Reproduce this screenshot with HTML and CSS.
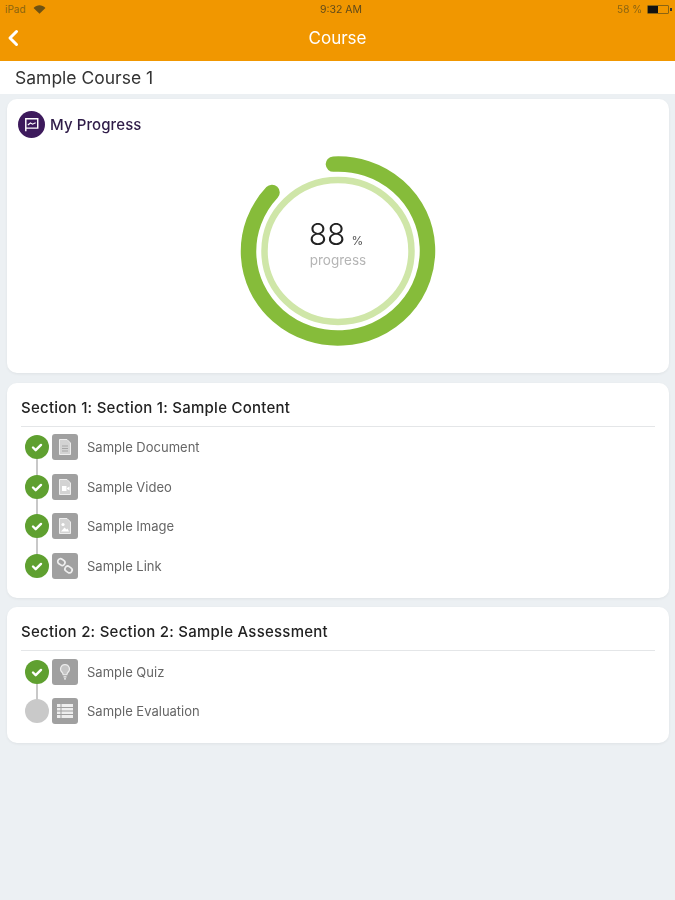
FILE: index.html
```html
<!DOCTYPE html>
<html lang="en">
<head>
<meta charset="utf-8">
<title>Course</title>
<link rel="stylesheet" href="styles.css">
</head>
<body>
<header class="appbar">
  <div class="status">
    <div class="status-left"><span>iPad</span>
      <svg class="wifi" viewBox="0 0 14 10" width="13" height="9"><path d="M7 9.600 0.400 3.200C4.200-.6 9.800-.6 13.600 3.200Z" fill="#6e5213"/></svg>
    </div>
    <span class="status-time">9:32 AM</span>
    <div class="status-right"><span>58 %</span>
      <span class="battery"><span class="battery-fill"></span></span><span class="battery-tip"></span>
    </div>
  </div>
  <div class="nav">
    <svg class="back" viewBox="0 0 12 18" width="12" height="18"><path d="M9.500 2.500 3 9l6.500 6.500" fill="none" stroke="#fff" stroke-width="3" stroke-linecap="round" stroke-linejoin="round"/></svg>
    <span class="nav-title">Course</span>
  </div>
</header>
<div class="course-name">Sample Course 1</div>
<main class="content">
  <section class="card progress-card">
    <div class="progress-head">
      <span class="flag"><svg viewBox="0 0 26 26" width="27" height="27"><path d="M7.500 7.500h11.500v9H7.500zM7.500 7.500v12" fill="none" stroke="#fff" stroke-width="1.400"/><path d="M9.500 13.500l2.500-2 2 1.200 3-1.400" fill="none" stroke="#fff" stroke-width="1.100"/></svg></span>
      <h2 class="progress-title">My Progress</h2>
    </div>
    <div class="ring-wrap">
      <svg class="ring" viewBox="0 0 200 196" width="200" height="196">
        <ellipse cx="100" cy="98" rx="73.500" ry="71" fill="none" stroke="#cfe6a8" stroke-width="6.500"/>
        <ellipse cx="100" cy="98" rx="87" ry="89.500" fill="none" stroke="#86bc3a" stroke-width="15.500" stroke-linecap="round" pathLength="100" stroke-dasharray="87.500 12.500" transform="rotate(-93 100 98)"/>
      </svg>
      <div class="ring-label">
        <div class="ring-value"><span class="ring-num">88</span><span class="ring-pct">%</span></div>
        <div class="ring-sub">progress</div>
      </div>
    </div>
  </section>

  <section class="card section-card">
    <h3 class="section-title">Section 1: Section 1: Sample Content</h3>
    <ul class="items">
      <li class="item">
        <span class="check done"><svg viewBox="0 0 24 24" width="24" height="24"><path d="M8 12.500l2.700 2.700 5.300-5.300" fill="none" stroke="#fff" stroke-width="2.400" stroke-linecap="round" stroke-linejoin="round"/></svg></span>
        <span class="tile"><svg viewBox="0 0 26 26" width="26" height="26"><path d="M7.500 5.500h7.500l3.500 3.500v11.500h-11z" fill="#d3d3d3" stroke="#eee" stroke-width="1"/><path d="M10 12h6M10 14.500h6M10 17h6" stroke="#a5a5a5" stroke-width="1"/></svg></span>
        <span class="item-name">Sample Document</span>
      </li>
      <li class="item">
        <span class="check done"><svg viewBox="0 0 24 24" width="24" height="24"><path d="M8 12.500l2.700 2.700 5.300-5.300" fill="none" stroke="#fff" stroke-width="2.400" stroke-linecap="round" stroke-linejoin="round"/></svg></span>
        <span class="tile"><svg viewBox="0 0 26 26" width="26" height="26"><path d="M7.500 5.500h7.500l3.500 3.500v11.500h-11z" fill="#d3d3d3" stroke="#eee" stroke-width="1"/><path d="M10 12h4.500v5H10z" fill="#fff"/><path d="M15 14l2.500-1.500v4L15 15z" fill="#fff"/></svg></span>
        <span class="item-name">Sample Video</span>
      </li>
      <li class="item">
        <span class="check done"><svg viewBox="0 0 24 24" width="24" height="24"><path d="M8 12.500l2.700 2.700 5.300-5.300" fill="none" stroke="#fff" stroke-width="2.400" stroke-linecap="round" stroke-linejoin="round"/></svg></span>
        <span class="tile"><svg viewBox="0 0 26 26" width="26" height="26"><path d="M7.500 5.500h7.500l3.500 3.500v11.500h-11z" fill="#d3d3d3" stroke="#eee" stroke-width="1"/><circle cx="11" cy="11.500" r="1.600" fill="#fff"/><path d="M9 18.500l3.500-4 2 2 1-1 1.500 3z" fill="#fff"/></svg></span>
        <span class="item-name">Sample Image</span>
      </li>
      <li class="item">
        <span class="check done"><svg viewBox="0 0 24 24" width="24" height="24"><path d="M8 12.500l2.700 2.700 5.300-5.300" fill="none" stroke="#fff" stroke-width="2.400" stroke-linecap="round" stroke-linejoin="round"/></svg></span>
        <span class="tile"><svg viewBox="0 0 26 26" width="26" height="26"><g transform="rotate(-5 13 13)"><rect x="6" y="6" width="7.500" height="5.500" rx="2.700" transform="rotate(40 9.700 8.700)" fill="none" stroke="#eee" stroke-width="1.700"/><rect x="12.500" y="14" width="7.500" height="5.500" rx="2.700" transform="rotate(40 16.200 16.700)" fill="none" stroke="#eee" stroke-width="1.700"/></g></svg></span>
        <span class="item-name">Sample Link</span>
      </li>
    </ul>
  </section>

  <section class="card section-card">
    <h3 class="section-title">Section 2: Section 2: Sample Assessment</h3>
    <ul class="items">
      <li class="item">
        <span class="check done"><svg viewBox="0 0 24 24" width="24" height="24"><path d="M8 12.500l2.700 2.700 5.300-5.300" fill="none" stroke="#fff" stroke-width="2.400" stroke-linecap="round" stroke-linejoin="round"/></svg></span>
        <span class="tile"><svg viewBox="0 0 26 26" width="26" height="26"><path d="M13 5.500a4.500 4.500 0 0 1 2.800 8c-.6.500-.8 1.200-.9 2.200h-3.800c-.1-1-.3-1.700-.9-2.200a4.500 4.500 0 0 1 2.800-8z" fill="#c4c4c4" stroke="#eee" stroke-width="1.100"/><path d="M11.500 17.800h3M12 19.800h2" stroke="#eee" stroke-width="1.300"/></svg></span>
        <span class="item-name">Sample Quiz</span>
      </li>
      <li class="item">
        <span class="check"></span>
        <span class="tile"><svg viewBox="0 0 26 26" width="26" height="26"><path d="M5 6h16v14H5z" fill="#eee"/><path d="M5 9.500h16M5 13h16M5 16.500h16M9 6v14" stroke="#a0a0a0" stroke-width="1"/></svg></span>
        <span class="item-name">Sample Evaluation</span>
      </li>
    </ul>
  </section>
</main>
</body>
</html>
```
FILE: styles.css
```css
* { box-sizing: border-box; }
html, body { margin: 0; padding: 0; }
body {
  width: 675px;
  height: 900px;
  overflow: hidden;
  background: #ecf0f3;
  font-family: Inter, "Open Sans", sans-serif;
  color: #222;
  filter: blur(0.45px);
}
.appbar { height: 61px; background: #f19700; display: flex; flex-direction: column; }
.status {
  height: 18px;
  padding: 0 3px 0 5px;
  display: grid;
  grid-template-columns: 1fr auto 1fr;
  align-items: center;
  font-size: 10px;
  color: #8a6412;
}
.status-left, .status-right { display: flex; align-items: center; gap: 4px; }
.status-left { gap: 7px; }
.status-right { justify-content: flex-end; }
.status-time { color: #5f4a1a; font-size: 10.500px; margin-left: 5px; }
.battery { width: 22px; height: 9px; border: 1px solid #8a6412; display: block; margin-left: 1px; border-radius: 1px; }
.battery-fill { display: block; width: 10px; height: 100%; background: #111; }
.battery-tip { width: 2px; height: 3px; background: #333; margin-left: -3px; }
.nav { flex: 1; display: flex; align-items: center; justify-content: center; position: relative; }
.back { position: absolute; left: 7px; top: 11px; }
.nav-title { color: #fff; font-size: 17px; padding-bottom: 3px; }
.course-name {
  height: 33px;
  background: #fff;
  padding-left: 15px;
  font-size: 17.500px;
  line-height: 33px;
  color: #333;
}
.content { padding: 5px 6px 0 7px; display: flex; flex-direction: column; gap: 9.500px; }
.card { background: #fff; border-radius: 10px; box-shadow: 0 1px 3px rgba(0,0,0,.06); }
.progress-card { height: 274px; padding: 12px 11px; }
.progress-head { display: flex; align-items: center; gap: 5px; }
.flag { width: 27px; height: 27px; border-radius: 50%; background: #3d1a5c; display: block; }
.flag svg { display: block; }
.progress-title { margin: 0; font-size: 15px; font-weight: 500; letter-spacing: .1px; color: #2f1c48; }
.ring-wrap { width: 200px; height: 196px; position: relative; margin: 15px auto 0; }
.ring { display: block; }
.ring-label { position: absolute; inset: 0; padding-bottom: 16px; display: flex; flex-direction: column; align-items: center; justify-content: center; }
.ring-value { display: flex; align-items: baseline; gap: 6px; height: 33px; line-height: 30px; margin-right: 4px; }
.ring-num { font-size: 30px; font-weight: 300; color: #222; }
.ring-pct { font-size: 12px; color: #555; }
.ring-sub { font-size: 13.500px; line-height: 16px; color: #b5b5b5; }
.section-card { padding: 14px 14px 12px; }
.section-title { margin: 0; font-size: 15px; letter-spacing: .25px; line-height: 22px; font-weight: 500; color: #222; padding-bottom: 7px; border-bottom: 1px solid #e4e6e8; }
.items { list-style: none; margin: 1px 0 0; padding: 0; }
.item { height: 39.500px; display: flex; align-items: center; position: relative; padding-left: 4px; }
.item:not(:last-child)::after {
  content: "";
  position: absolute;
  left: 15px;
  top: 30px;
  width: 1.500px;
  height: 20px;
  background: #c8c8c8;
}
.check { width: 24px; height: 24px; border-radius: 50%; background: #c9c9c9; display: block; position: relative; z-index: 1; }
.check.done { background: #5fa030; }
.check svg { display: block; }
.tile { width: 26px; height: 26px; border-radius: 3px; background: #a0a0a0; display: block; margin-left: 3px; }
.tile svg { display: block; }
.item-name { margin-left: 9px; font-size: 13px; color: #666; }
```
